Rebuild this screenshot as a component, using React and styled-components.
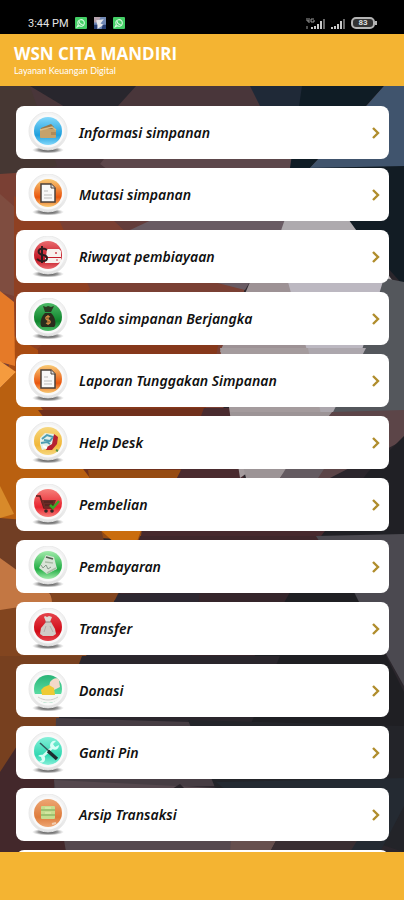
import styled, { createGlobalStyle } from "styled-components"

const GlobalStyle = createGlobalStyle`
    * {
        box-sizing: border-box;
    }

    body {
        margin: 0;
        font-family: "Noto Sans", "Open Sans", sans-serif;
    }
`

const Screen = styled.div`
    height: 100vh;
    display: flex;
    flex-direction: column;
    background: #f4b432;
`

const StatusBar = styled.div`
    height: 34px;
    padding: 12px 29px 0 28px;
    display: flex;
    align-items: center;
    justify-content: space-between;
    background: #000;
    color: #e4e4e4;
    font-family: "Roboto", sans-serif;
    font-size: 11px;
`

const StatusGroup = styled.div`
    display: flex;
    align-items: center;
    gap: ${({$gap}) => $gap}px;
`

const Header = styled.header`
    height: 52px;
    padding: 10px 14px 0;
    color: #fff;
`

const Title = styled.h1`
    margin: 0;
    font-family: "Open Sans", sans-serif;
    font-size: 17px;
    line-height: 20px;
    font-weight: 700;
`

const Subtitle = styled.p`
    margin: 0;
    font-family: "Lato", sans-serif;
    font-size: 9px;
    line-height: 14px;
`

const Content = styled.main`
    position: relative;
    flex: 1;
    min-height: 0;
    overflow: hidden;
    background: #2b262c;
`

const Backdrop = styled.svg`
    position: absolute;
    inset: 0;
    width: 100%;
    height: 100%;
`

const Menu = styled.nav`
    position: relative;
    padding: 20px 15px 0 16px;
    display: grid;
    gap: 9px;
`

const MenuItem = styled.a`
    height: 53px;
    padding: 0 8px 0 12px;
    display: flex;
    align-items: center;
    gap: 11px;
    border-radius: 8px;
    background: #fff;
    color: #111;
    text-decoration: none;
`

const Label = styled.span`
    flex: 1;
    font-size: 14px;
    font-style: italic;
    font-weight: 600;
`

const Footer = styled.footer`
    height: 48px;
    background: #f4b432;
`

const facets = [
    // top
    ["0,0 404,0 404,90 0,110", "#49363a"],
    ["0,0 30,0 57,80 0,92", "#463733"],
    ["30,0 136,0 118,20 70,24", "#28262d"],
    ["100,78 130,40 290,60 310,100 130,100", "#5d474b"],
    ["250,0 302,0 302,90 262,24", "#1f2937"],
    ["302,0 384,0 310,82 290,82", "#0f1c25"],
    ["384,0 404,0 404,82 308,84 340,50", "#40546d"],
    ["308,82 404,80 404,200 350,140", "#121c24"],
    // left, warm
    ["0,88 60,84 160,140 245,200 222,330 100,330 0,330", "#7a4034"],
    ["0,108 16,122 14,210 0,206", "#7f4d40"],
    ["14,110 60,136 90,203 40,264 14,300", "#8f4022"],
    ["60,84 250,84 290,136 130,150", "#633c3b"],
    ["90,220 222,240 205,326 40,326 36,264", "#86381b"],
    ["14,250 38,264 40,326 0,330", "#a94c12"],
    ["0,205 14,216 15,280 0,276", "#e57a28"],
    ["0,275 16,286 0,302", "#f59b3e"],
    ["0,302 16,286 40,320 90,386 102,450 0,452", "#b96010"],
    ["38,324 207,322 180,392 90,392", "#70301c"],
    ["88,384 182,384 150,455 100,452", "#964b12"],
    ["204,322 236,322 250,452 146,452 180,386", "#4a2b2f"],
    ["0,400 14,428 0,432", "#d88a2a"],
    ["0,432 100,440 120,514 50,514 0,476", "#713e24"],
    ["98,442 142,442 136,458 116,458", "#ca6d0e"],
    ["0,472 50,508 56,522 0,530", "#c37743"],
    ["50,500 122,500 84,574 0,574 0,524 52,516", "#82451f"],
    ["0,570 84,570 56,640 0,692", "#77401f"],
    ["0,686 30,640 60,640 66,766 0,766", "#43282b"],
    // middle, light
    ["130,144 160,130 290,130 245,204 190,190", "#695b63"],
    ["286,130 346,130 392,194 350,210 262,200", "#aeaaae"],
    ["250,196 290,196 310,266 220,266", "#9d9295"],
    ["288,196 350,196 386,192 394,206 366,268 308,268", "#bcb8c1"],
    ["384,192 404,196 404,330 330,328 362,264", "#54575c"],
    ["220,262 310,262 332,328 240,392 230,328", "#a49b9d"],
    ["308,262 366,262 332,328 322,334", "#aca7ad"],
    ["230,326 332,326 282,392 246,392", "#9c9496"],
    ["332,326 404,324 404,354 330,392 280,392", "#5c4548"],
    ["280,392 290,376 326,380 318,392", "#645b61"],
    // lower right, dark
    ["404,350 404,454 316,454 368,386", "#202025"],
    ["150,392 366,392 318,454 140,456", "#47292e"],
    ["140,450 318,450 330,514 118,514", "#40272c"],
    ["316,450 404,448 404,600 355,512", "#4b4950"],
    ["118,508 200,506 190,580 82,580", "#2d2730"],
    ["200,506 290,506 280,580 190,580", "#35252a"],
    ["290,506 354,506 404,606 404,700 216,640", "#1f1f23"],
    ["82,570 280,570 250,640 56,640", "#2a262c"],
    ["56,632 190,636 216,700 54,704", "#463d43"],
    ["188,634 404,640 404,766 216,704", "#232429"],
    ["54,694 218,702 234,766 66,766", "#55484e"],
    ["164,708 180,698 190,708", "#29242a"],
    ["216,696 404,692 404,720 380,766 300,766", "#242a32"],
    ["232,740 284,740 270,766 230,766", "#67504e"],
    ["284,740 360,750 350,766 270,766", "#392e32"],
]

const discs = {
    blue: ["#83d8fb", "#1f9fdc"],
    orange: ["#f8ca75", "#e9560f"],
    red: ["#ea6a6e", "#c01220"],
    green: ["#4cba66", "#0f842c"],
    yellow: ["#f6d77e", "#f1b73a"],
    coral: ["#f67f7a", "#e8242f"],
    lime: ["#a2ebab", "#22ad44"],
    crimson: ["#e5444c", "#d10b17"],
    mint: ["#84f0d9", "#32d8b2"],
    copper: ["#eda673", "#de7c3d"],
    jade: ["#29b477", "#58daa1"],
}

const glyphs = {
    wallet: (
        <g>
            <path d="M13 17l10-4 3 3 1 10H12z" fill="#9a7749" />
            <rect x="12" y="18" width="16" height="9" rx="1" fill="#c6a26b" />
            <path d="M12 19l12-3 4 3" fill="none" stroke="#d9bb85" strokeWidth="1.5" />
            <path d="M23 21h5v3h-5z" fill="#b08a58" />
        </g>
    ),
    document: (
        <g>
            <path d="M13 11h10l4 4v14H13z" fill="#f8f8f8" stroke="#4a403b" strokeWidth="1.5" />
            <path d="M23 11v4h4" fill="#ddd" stroke="#4a403b" />
            <path d="M16 18h4M16 22h8M16 25h8" stroke="#bbb" />
        </g>
    ),
    card: (
        <g>
            <path d="M19 14h12l2 2v6H18zM17 23h16v4l-3 1H17z" fill="#f7f1ed" />
            <circle cx="28" cy="18" r="1" fill="#d1404a" />
            <path d="M28 25h2" stroke="#d1404a" />
            <path d="M19 15c-4-3-10-1-8 3 2 3 8 1 8 5 0 4-7 4-10 1M14 11v17" fill="none" stroke="#2b1d1f" strokeWidth="2" />
        </g>
    ),
    moneyBag: (
        <g>
            <path d="M15 9l3 1 2-1 3 1 3-1-3 6h-6z" fill="#2b3a22" />
            <path d="M17 16h6c4 3 6 12 3 14H14c-3-2-1-11 3-14z" fill="#2a2d1d" />
            <path d="M22 20c-4-2-6 2-2 3s2 5-2 3M20 18v10" fill="none" stroke="#d58a40" strokeWidth="1.3" />
        </g>
    ),
    support: (
        <g>
            <path d="M12 17l5-5 9 1 2 4-3 9-11 3-2-6z" fill="#e5f0e9" />
            <path d="M14 18l5-4 6 2-3 4-6-1M13 22l6-1 3 2" fill="none" stroke="#4d9db2" strokeWidth="2" />
            <path d="M26 13l4 3-1 7-5 6-6 0 1-3 5-3 1-5z" fill="#b62030" />
            <path d="M15 25l4 2" fill="none" stroke="#fff" strokeWidth="2" />
            <path d="M28 29l2 1" stroke="#579442" strokeWidth="2" />
        </g>
    ),
    cart: (
        <g>
            <path d="M8 13h4l4 12h9" fill="none" stroke="#5a1e1d" strokeWidth="1.6" />
            <path d="M13 17h15l-3 8H16z" fill="#6d2b25" />
            <path d="M16 19h9M17 22h8" stroke="#47201e" />
            <circle cx="18" cy="28" r="1.8" fill="#302724" />
            <circle cx="24" cy="28" r="1.8" fill="#302724" />
            <path d="M22 22l3 3 6-7" fill="none" stroke="#38a928" strokeWidth="2.5" />
        </g>
    ),
    receipt: (
        <g>
            <path d="M18 10l8 2 3 12-10 5-8-6z" fill="#d9e4d7" />
            <path d="M18 12l7 2" stroke="#52604f" strokeWidth="1.6" />
            <path d="M17 17l8 1M19 28l9-5" fill="none" stroke="#aabca6" strokeWidth="1.5" />
            <path d="M13 20l2 3 3-3 2 4 3-2" fill="none" stroke="#86998a" />
        </g>
    ),
    sack: (
        <g>
            <path d="M17 9l2 1 2-1 3 1-2 5h-4l-2-5z" fill="#ddd9d3" />
            <path d="M18 15h5l4 7 1 5-3 2H15l-3-2 1-6z" fill="#d0ccc6" />
            <path d="M17 15h6" stroke="#8e8180" />
            <path d="M18 19l-2 6M22 19l3 6" stroke="#b5aeaa" />
        </g>
    ),
    donation: (
        <g>
            <path d="M6 25h28c-1 5-7 9-14 9S7 30 6 25z" fill="#f6f6f3" />
            <path d="M22 13c3-4 7-5 9-2l1 7-6 3-5-3z" fill="#f3d9c9" />
            <path d="M16 18l5-2 5 3 1 7H14l-1-5z" fill="#efca35" />
            <path d="M10 28c6 4 14 4 20 0" fill="none" stroke="#cfcfca" />
        </g>
    ),
    tools: (
        <g>
            <path d="M14 26l12-11" stroke="#d5fbf3" strokeWidth="2.4" />
            <path d="M22 15c0-4 3-6 6-5l-3 3 2 3 4-2c0 5-5 6-8 3zM10 25c4-3 8 0 7 4-1 3-4 3-6 2l3-2-1-3z" fill="#d9fff7" />
            <path d="M12 12l10 9" stroke="#32575a" strokeWidth="1.5" />
            <path d="M20 20l9 8" stroke="#1e2d31" strokeWidth="3.4" />
        </g>
    ),
    archive: (
        <g>
            <rect x="13" y="13" width="14" height="13" rx="1" fill="#c5dd8f" />
            <path d="M13 17h14M13 22h14" stroke="#90b968" strokeWidth="1.3" />
            <path d="M17 15h6M17 20h6" stroke="#e2efb0" />
            <path d="M24 31l4-1" stroke="#f3ceb0" strokeWidth="2" />
        </g>
    ),
}

const items = [
    {label: "Informasi simpanan", disc: "blue", glyph: "wallet"},
    {label: "Mutasi simpanan", disc: "orange", glyph: "document"},
    {label: "Riwayat pembiayaan", disc: "red", glyph: "card"},
    {label: "Saldo simpanan Berjangka", disc: "green", glyph: "moneyBag"},
    {label: "Laporan Tunggakan Simpanan", disc: "orange", glyph: "document"},
    {label: "Help Desk", disc: "yellow", glyph: "support"},
    {label: "Pembelian", disc: "coral", glyph: "cart"},
    {label: "Pembayaran", disc: "lime", glyph: "receipt"},
    {label: "Transfer", disc: "crimson", glyph: "sack"},
    {label: "Donasi", disc: "jade", glyph: "donation"},
    {label: "Ganti Pin", disc: "mint", glyph: "tools"},
    {label: "Arsip Transaksi", disc: "copper", glyph: "archive"},
]

const GradientSheet = styled.svg`
    position: absolute;
`

const Gradients = () => (
    <GradientSheet width="0" height="0" aria-hidden="true">
        <defs>
            {Object.entries(discs).map(([name, [top, bottom]]) => (
                <linearGradient key={name} id={`disc-${name}`} x1="0" y1="0" x2="0" y2="1">
                    <stop offset="0" stopColor={top} />
                    <stop offset="0.65" stopColor={bottom} />
                    <stop offset="1" stopColor={top} />
                </linearGradient>
            ))}
            <linearGradient id="rim" x1="0" y1="0" x2="0" y2="1">
                <stop offset="0" stopColor="#f4f4f4" />
                <stop offset="0.6" stopColor="#eeeeee" />
                <stop offset="1" stopColor="#e2e2e2" />
            </linearGradient>
            <radialGradient id="shade">
                <stop offset="0" stopColor="#222" stopOpacity="0.9" />
                <stop offset="0.6" stopColor="#555" stopOpacity="0.6" />
                <stop offset="1" stopColor="#999" stopOpacity="0" />
            </radialGradient>
        </defs>
    </GradientSheet>
)

const Badge = ({disc, glyph}) => (
    <svg width="40" height="42" viewBox="0 0 40 42" aria-hidden="true">
        <ellipse cx="20" cy="38" rx="16" ry="3.5" fill="url(#shade)" />
        <circle cx="20" cy="19" r="19" fill="url(#rim)" stroke="#e9e9e9" />
        <circle cx="20" cy="19" r="16.5" fill="#f9f9f9" />
        <circle cx="20" cy="19" r="14" fill={`url(#disc-${disc})`} />
        <g transform="translate(0 -1)">{glyphs[glyph]}</g>
    </svg>
)

const Chevron = () => (
    <svg width="10" height="12" viewBox="0 0 10 12" aria-hidden="true">
        <path d="M2 1l5 5-5 5" fill="none" stroke="#b08d2c" strokeWidth="2.4" />
    </svg>
)

const ChatIcon = () => (
    <svg width="12" height="12" viewBox="0 0 11 11" aria-hidden="true">
        <rect width="11" height="11" rx="1" fill="#43ce65" />
        <path d="M2 9l1-2a3 3 0 1 1 1 1z" fill="none" stroke="#d8f8df" />
        <path d="M4 4c0 2 1 3 3 3" fill="none" stroke="#d8f8df" />
    </svg>
)

const PhotoIcon = () => (
    <svg width="12" height="12" viewBox="0 0 11 11" aria-hidden="true">
        <rect width="11" height="11" fill="#7189b5" />
        <path d="M0 0h6L4 5H0z" fill="#b4a2ad" />
        <path d="M2 3l7-1-3 4 3 1-6 4V7z" fill="#e5e6e9" />
        <path d="M0 7h3v4H0zM8 7h3v4H7z" fill="#273e72" />
    </svg>
)

const Signal = ({network}) => (
    <svg width={network ? 20 : 15} height="13" viewBox={network ? "-5 0 20 13" : "0 0 15 13"} aria-hidden="true">
        {network && <path d="M-4 1v3h2M-2 1v5M3 2H0v3h3V3M-4 9v3" fill="none" stroke="#999" />}
        <path d="M1 12v-2M4 12V9M7 12V7M10 12V4" stroke="#c9c9c9" strokeWidth="2" />
        <path d="M13 12V2" stroke="#686868" strokeWidth="2" />
    </svg>
)

const Battery = styled.span`
    position: relative;
    width: 24px;
    height: 12px;
    border: 2px solid #b4b4b4;
    border-radius: 5px;
    background: #333;
    color: #ddd;
    font-size: 8px;
    font-weight: 700;
    line-height: 8px;
    text-align: center;

    &::after {
        content: "";
        position: absolute;
        top: 2px;
        right: -4px;
        width: 2px;
        height: 4px;
        background: #b4b4b4;
    }
`

const App = () => {
    return (
        <Screen>
            <GlobalStyle />
            <Gradients />
            <StatusBar>
                <StatusGroup $gap={7}>
                    <span>3:44 PM</span>
                    <ChatIcon />
                    <PhotoIcon />
                    <ChatIcon />
                </StatusGroup>
                <StatusGroup $gap={5}>
                    <Signal network />
                    <Signal />
                    <Battery>83</Battery>
                </StatusGroup>
            </StatusBar>
            <Header>
                <Title>WSN CITA MANDIRI</Title>
                <Subtitle>Layanan Keuangan Digital</Subtitle>
            </Header>
            <Content>
                <Backdrop viewBox="0 0 404 766" preserveAspectRatio="none" aria-hidden="true">
                    {facets.map(([points, fill]) => (
                        <polygon key={points} points={points} fill={fill} />
                    ))}
                </Backdrop>
                <Menu>
                    {items.map(({label, disc, glyph}) => (
                        <MenuItem key={label} href="#">
                            <Badge disc={disc} glyph={glyph} />
                            <Label>{label}</Label>
                            <Chevron />
                        </MenuItem>
                    ))}
                    <MenuItem as="div" />
                </Menu>
            </Content>
            <Footer />
        </Screen>
    )
}

export default App
